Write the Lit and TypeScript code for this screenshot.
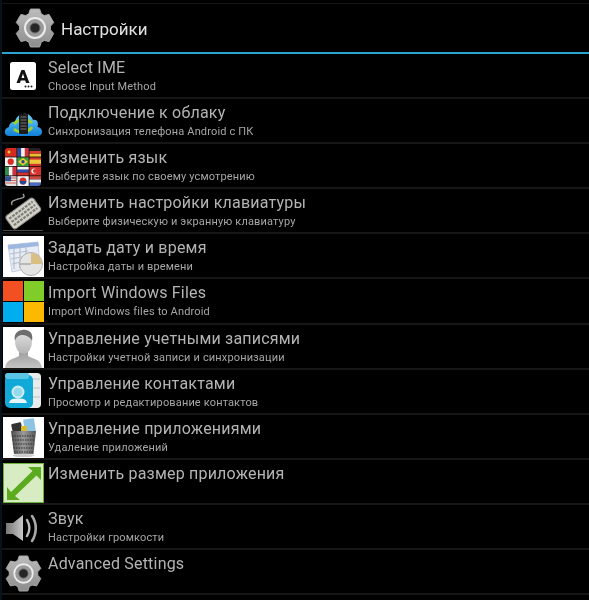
import { LitElement, html, css, svg } from "lit";
import { customElement } from "lit/decorators.js";

function gearPath(cx: number, cy: number, rOut: number, rIn: number): string {
  const pts: string[] = [];
  for (let i = 0; i < 6; i++) {
    const a = (-90 + i * 60) * Math.PI / 180;
    const w1 = 0.24, w2 = 0.36;
    const p = (r: number, d: number) => `${(cx + r * Math.cos(a + d)).toFixed(2)} ${(cy + r * Math.sin(a + d)).toFixed(2)}`;
    pts.push(p(rIn, -w2 - 0.05), p(rOut, -w1), p(rOut, w1), p(rIn, w2 + 0.05));
  }
  return "M" + pts.join("L") + "Z";
}

const gear = (size: number) => svg`
  <svg class="gear" width=${size} height=${size} viewBox="0 0 40 40">
    <defs><linearGradient id="gg" x1="0" y1="0" x2="0" y2="1"><stop offset="0" stop-color="#bcbcbc"/><stop offset="1" stop-color="#8c8c8c"/></linearGradient></defs>
    <path d=${gearPath(20, 20, 19.5, 15.5)} fill="url(#gg)" stroke="#aaa" stroke-width="1" stroke-linejoin="round"/>
    <circle cx="20" cy="20" r="10" fill="#9a9a9a" stroke="#ececec" stroke-width="2"/>
    <circle cx="20" cy="20" r="5" fill="#262626" stroke="#6a6a6a" stroke-width="1"/>
  </svg>`;

const imeIcon = svg`<svg viewBox="0 0 46 44" width="46" height="44">
  <rect x="10" y="7" width="26" height="28" rx="2.5" fill="#fff"/>
  <text x="23" y="28" text-anchor="middle" font-family="Roboto, sans-serif" font-weight="900" font-size="19" fill="#111">A</text>
  <circle cx="25.500" cy="31.500" r="1" fill="#222"/><circle cx="28.500" cy="31.500" r="1" fill="#222"/><circle cx="31.500" cy="31.500" r="1" fill="#222"/>
</svg>`;

const cloudIcon = svg`<svg viewBox="0 0 46 44" width="46" height="44">
  <defs><linearGradient id="cl" x1="0" y1="0" x2="0" y2="1"><stop offset="0" stop-color="#6fd0f5"/><stop offset="1" stop-color="#0f7fd8"/></linearGradient></defs>
  <path d="M9 36 C3.500 36 3.500 28 9 27 C9 23 13 21 15 22 C17 12 30 11 33 20 C37 19 39 23 37.500 27 C43 27 44 36 38 36 Z" fill="url(#cl)"/>
  <path d="M14 24 A11 9 0 0 1 32 23 M32 27 A11 9 0 0 1 14 29" fill="none" stroke="#9bd22e" stroke-width="3"/>
  <rect x="19" y="14" width="9" height="20" rx="1" fill="#1c1c1c"/>
  <path d="M20.500 17h6M20.500 20h6M20.500 23h6M20.500 26h6M20.500 29h6" stroke="#777" stroke-width="1.100"/>
</svg>`;

const flagsIcon = svg`<svg viewBox="0 0 46 44" width="46" height="44">
  <defs><clipPath id="fc"><rect x="5" y="3" width="36" height="38" rx="3"/></clipPath></defs>
  <g clip-path="url(#fc)">
    <rect x="5" y="3" width="36" height="38" fill="#111"/>
    <rect x="5" y="3" width="11.5" height="8.6" fill="#d42a1f"/><circle cx="9" cy="7" r="1.5" fill="#ecc832"/>
    <rect x="17.3" y="3" width="3.8" height="8.6" fill="#2b4c9b"/><rect x="21.1" y="3" width="3.8" height="8.6" fill="#f3f3f3"/><rect x="24.9" y="3" width="3.8" height="8.6" fill="#d6303a"/>
    <rect x="29.5" y="3" width="11.5" height="3" fill="#222"/><rect x="29.5" y="6" width="11.5" height="2.8" fill="#d63a30"/><rect x="29.5" y="8.8" width="11.5" height="2.8" fill="#e6bf2c"/>
    <rect x="5" y="12.4" width="11.5" height="8.6" fill="#f3f3f3"/><circle cx="10.7" cy="16.7" r="3.1" fill="#d62a22"/>
    <rect x="17.3" y="12.4" width="11.4" height="8.6" fill="#3b9a3c"/><path d="M23 13 L28 16.7 23 20.4 18 16.7Z" fill="#ecd030"/><circle cx="23" cy="16.7" r="1.7" fill="#24478f"/>
    <rect x="29.5" y="12.4" width="11.5" height="8.6" fill="#d1322a"/><rect x="29.5" y="14.6" width="11.5" height="4.2" fill="#eec63a"/>
    <rect x="5" y="21.8" width="3.8" height="8.6" fill="#2c8f45"/><rect x="8.8" y="21.8" width="3.9" height="8.6" fill="#f3f3f3"/><rect x="12.7" y="21.8" width="3.8" height="8.6" fill="#d6303a"/>
    <rect x="17.3" y="21.8" width="11.4" height="2.9" fill="#f5f5f5"/><rect x="17.3" y="24.7" width="11.4" height="2.9" fill="#2a4fb0"/><rect x="17.3" y="27.6" width="11.4" height="2.8" fill="#d8302c"/>
    <rect x="29.5" y="21.8" width="11.5" height="8.6" fill="#d8322c"/><circle cx="34" cy="26" r="2.6" fill="#f3f3f3"/><circle cx="35" cy="26" r="2.1" fill="#d8322c"/>
    <rect x="5" y="31.2" width="11.5" height="9.8" fill="#e6e0e0"/><path d="M5 33h11.5M5 35.5h11.5M5 38h11.5" stroke="#d0605a" stroke-width="1.2"/><rect x="5" y="31.2" width="6" height="5" fill="#33508f"/>
    <rect x="17.3" y="31.2" width="11.4" height="9.8" fill="#f3f3f3"/><circle cx="23" cy="36" r="3.4" fill="#d3332e"/><path d="M19.6 36 a3.4 3.4 0 0 0 6.8 0Z" fill="#244a9a"/>
    <rect x="29.5" y="31.2" width="11.5" height="3.3" fill="#cc4a42"/><rect x="29.5" y="34.5" width="11.5" height="3.2" fill="#eee"/><rect x="29.5" y="37.7" width="11.5" height="3.3" fill="#4a6cc0"/>
  </g>
</svg>`;

const keyboardIcon = svg`<svg viewBox="0 0 46 44" width="46" height="44">
  <path d="M12 15 C10 11 15 10 18 9 C22 8 26 8 23 4" fill="none" stroke="#9a9a9a" stroke-width="1.400"/>
  <g transform="rotate(-36 23 23)">
    <rect x="6" y="15.500" width="34" height="16" rx="3" fill="#d2d2cb" stroke="#8d8d86" stroke-width="1"/>
    <path d="M8.500 19.500h29M8.500 23.500h29M8.500 27.500h29" stroke="#7d7d75" stroke-width="2.200" stroke-dasharray="2.800 1.100"/>
  </g>
  <rect x="3" y="40" width="40" height="1" fill="#4a4a4a"/>
</svg>`;

const dateIcon = svg`<svg viewBox="0 0 46 44" width="46" height="44">
  <rect x="3" y="1" width="41" height="41" fill="#fff"/>
  <path d="M8 10 L38 7 L40 31 L12 37 Z" fill="#e8ecf4" stroke="#b4bed2" stroke-width="0.7"/>
  <path d="M8 10 L38 7 L38.500 11 L8.500 14.500 Z" fill="#9db8e0"/>
  <path d="M10 19l18-3M11 24l16-3M12 29l14-3M14 14v20M20 13v20M26 12v17" stroke="#b4bfd0" stroke-width="1.200"/>
  <circle cx="31" cy="29" r="11.500" fill="#e4e4e2" stroke="#b0b0ae" stroke-width="1"/>
  <path d="M31 29 V18 A11 11 0 0 1 42 29 Z" fill="#d9bf84"/>
  <path d="M31 29 H20" stroke="#8c8c8c" stroke-width="1"/>
</svg>`;

const windowsIcon = svg`<svg viewBox="0 0 46 44" width="46" height="44">
  <rect x="3" y="1" width="20" height="20" fill="#f25022"/>
  <rect x="24" y="1" width="20" height="20" fill="#80cc28"/>
  <rect x="3" y="22" width="20" height="20" fill="#00adef"/>
  <rect x="24" y="22" width="20" height="20" fill="#fdb900"/>
</svg>`;

const personIcon = svg`<svg viewBox="0 0 46 44" width="46" height="44">
  <defs>
    <linearGradient id="pg" x1="0" y1="0" x2="0" y2="1"><stop offset="0" stop-color="#e2e2e2"/><stop offset="1" stop-color="#b4b4b4"/></linearGradient>
    <linearGradient id="pb" x1="0" y1="0" x2="0" y2="1"><stop offset="0" stop-color="#9c9c9c"/><stop offset="1" stop-color="#c4c4c4"/></linearGradient>
  </defs>
  <rect x="3" y="1" width="41" height="41" fill="#fff"/>
  <path d="M5 42 C6 33 14 33 19 30 V25 H28 V30 C33 33 41 33 42 42 Z" fill="url(#pb)"/>
  <ellipse cx="23.500" cy="16" rx="8.500" ry="11.500" fill="url(#pg)"/>
  <path d="M15 15 C13 6 20 3 26 4 C32 5 33 10 32 15 C30 10 25 9 21 9 C18 10 16 11 15 15Z" fill="#6e6e6e"/>
</svg>`;

const contactsIcon = svg`<svg viewBox="0 0 46 44" width="46" height="44">
  <rect x="25" y="2" width="16" height="35" rx="4" fill="#e8ecec"/>
  <path d="M33 8h7M33 17h7M33 26h7" stroke="#b8c6c8" stroke-width="1.200"/>
  <rect x="5" y="4" width="28" height="33" rx="5" fill="#10a9d8"/>
  <rect x="5" y="2" width="24" height="6" rx="2.500" fill="#59c4e4"/>
  <circle cx="18" cy="21" r="6.500" fill="#cfeef6"/><circle cx="18" cy="21" r="4.500" fill="#10a9d8" opacity="0.300"/>
  <path d="M9 32 C10 28 13 27.500 18 27.500 C23 27.500 26 28 27 32 Z" fill="#e6f6fa"/>
</svg>`;

const trashIcon = svg`<svg viewBox="0 0 46 44" width="46" height="44">
  <defs><linearGradient id="tg" x1="0" y1="0" x2="1" y2="0"><stop offset="0" stop-color="#4c4c4c"/><stop offset="0.500" stop-color="#9a9a9a"/><stop offset="1" stop-color="#555"/></linearGradient></defs>
  <rect x="3" y="1" width="41" height="41" fill="#fff"/>
  <rect x="12" y="7" width="10" height="11" rx="1" fill="#333" transform="rotate(-12 17 12)"/>
  <rect x="24" y="3" width="11" height="14" rx="1" fill="#8cc4e8" transform="rotate(-8 29 10)"/>
  <rect x="21" y="10" width="6" height="7" fill="#d9bd2e"/>
  <path d="M11 15 H36 L33.500 38 H14 Z" fill="url(#tg)"/>
  <path d="M12 20h23M12.500 24h22M13 28h21M13.500 32h20M14 36h19" stroke="#2e2e2e" stroke-width="1.200" stroke-dasharray="1.500 1"/>
  <ellipse cx="23.500" cy="39.500" rx="11" ry="1.600" fill="#ccc"/>
</svg>`;

const resizeIcon = svg`<svg viewBox="0 0 46 44" width="46" height="44">
  <rect x="3.500" y="2.500" width="40" height="39" fill="#d8ecc4" stroke="#6fb23a" stroke-width="1"/>
  <path d="M28 6 H41 V19 L36.500 14.500 L15 35 L20 39 H7 V26 L11 31 L32.500 10 Z" fill="#5cab1e"/>
</svg>`;

const soundIcon = svg`<svg viewBox="0 0 46 44" width="46" height="44">
  <defs><linearGradient id="sg" x1="0" y1="0" x2="1" y2="0"><stop offset="0" stop-color="#777"/><stop offset="1" stop-color="#c8c8c8"/></linearGradient></defs>
  <path d="M6 17 H13 L23 9 V35 L13 28 H6 Z" fill="url(#sg)"/>
  <path d="M27 14 C30 19 30 25 27 30" fill="none" stroke="#bdbdbd" stroke-width="2.400" stroke-linecap="round"/>
  <path d="M32 10 C37 17 37 27 32 35" fill="none" stroke="#a8a8a8" stroke-width="2.600" stroke-linecap="round"/>
</svg>`;

const ROWS = [
  { icon: imeIcon, t: "Select IME", s: "Choose Input Method" },
  { icon: cloudIcon, t: "Подключение к облаку", s: "Синхронизация телефона Android с ПК" },
  { icon: flagsIcon, t: "Изменить язык", s: "Выберите язык по своему усмотрению" },
  { icon: keyboardIcon, t: "Изменить настройки клавиатуры", s: "Выберите физическую и экранную клавиатуру" },
  { icon: dateIcon, t: "Задать дату и время", s: "Настройка даты и времени" },
  { icon: windowsIcon, t: "Import Windows Files", s: "Import Windows files to Android" },
  { icon: personIcon, t: "Управление учетными записями", s: "Настройки учетной записи и синхронизации" },
  { icon: contactsIcon, t: "Управление контактами", s: "Просмотр и редактирование контактов" },
  { icon: trashIcon, t: "Управление приложениями", s: "Удаление приложений" },
  { icon: resizeIcon, t: "Изменить размер приложения", s: "" },
  { icon: soundIcon, t: "Звук", s: "Настройки громкости" },
  { icon: gear(37), t: "Advanced Settings", s: "" },
];

@customElement("app-root")
export class AppRoot extends LitElement {
  static styles = css`
    :host { display: block; width: 589px; height: 600px; overflow: hidden; background: #000; font-family: Roboto, "Noto Sans", sans-serif; }
    .page { height: 600px; border-left: 2px solid #06121c; box-sizing: border-box; overflow: hidden; filter: blur(0.35px); }
    .top { height: 3px; border-bottom: 1px solid #161616; }
    .header { height: 48px; display: flex; align-items: center; gap: 6px; margin-left: -1px; padding-left: 14px; border-bottom: 2px solid #2aa5d0; }
    .header .title { font-size: 17px; color: #e2e2e2; padding-top: 2px; }
    .row { height: 45.1px; box-sizing: border-box; display: flex; padding-top: 1px; border-bottom: 2px solid #161616; }
    .ic { width: 46px; height: 44px; margin-left: -2px; flex: none; display: flex; align-items: center; justify-content: center; }
    .ic svg { display: block; flex: none; }
    .text { margin-left: 2px; padding-top: 3px; min-width: 0; white-space: nowrap; }
    .t { font-size: 16px; line-height: 19px; color: #b4b4b4; letter-spacing: 0.2px; }
    .s { font-size: 11px; line-height: 14px; margin-top: 3px; color: #a6a6a6; letter-spacing: 0.15px; }
  `;
  render() {
    return html`<div class="page">
      <div class="top"></div>
      <div class="header">${gear(40)}<div class="title">Настройки</div></div>
      ${ROWS.map(r => html`<div class="row"><div class="ic">${r.icon}</div><div class="text"><div class="t">${r.t}</div>${r.s ? html`<div class="s">${r.s}</div>` : ""}</div></div>`)}
    </div>`;
  }
}
